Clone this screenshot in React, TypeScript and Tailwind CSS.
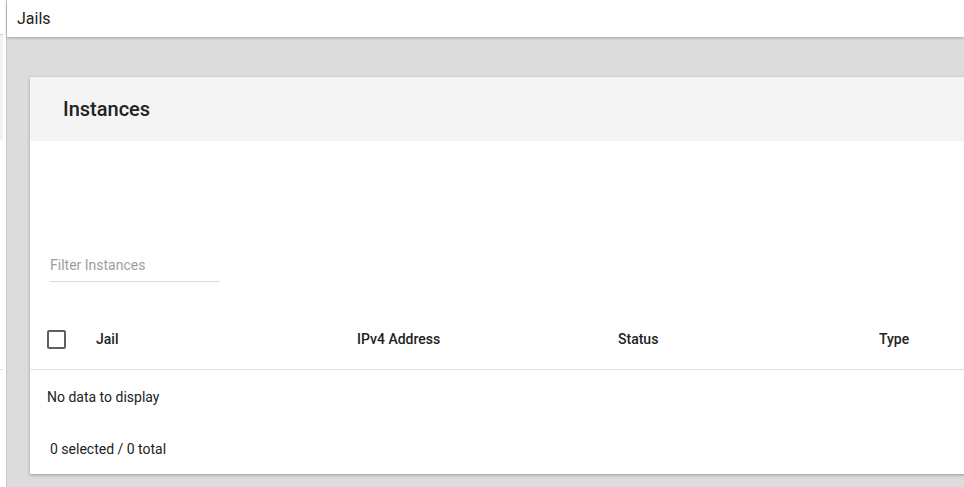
export default function App() {
  const cols = ["Jail", "IPv4 Address", "Status", "Type"];

  return (
    <div className="flex h-[487px] w-[964px] overflow-hidden bg-[#dcdcdc] font-['Roboto',sans-serif] text-[#222]">
      {/* cut-off sidebar */}
      <div className="flex w-[6px] shrink-0 flex-col bg-white">
        <div className="h-[35px] w-[3px] border-b border-[#cfcfcf]" />
        <div className="h-[105px] w-[3px] bg-[#f2f2f2]" />
        <div className="h-[230px] w-[3px] border-b border-[#e0e0e0]" />
      </div>
      <div className="w-px shrink-0 bg-[#c8c8c8]" />

      <div className="flex min-w-0 flex-1 flex-col">
        <div className="relative z-10 flex h-[37px] shrink-0 items-center bg-white pl-[10px] text-[16px] shadow-[0_1px_3px_rgba(0,0,0,0.25)]">
          Jails
        </div>

        <div className="flex-1 pl-[23px] pt-[40px]">
          <div className="h-[397px] w-[960px] bg-white shadow-[0_1px_3px_rgba(0,0,0,0.3)]">
            <div className="flex h-[64px] items-center bg-[#f4f4f4] pl-[33px] text-[20px] font-medium text-[#222]">
              Instances
            </div>

            <div className="pl-[20px] pt-[114px]">
              <div className="w-[170px] border-b border-[#dcdcdc] pb-[5px] text-[14px] text-[#9e9e9e]">
                Filter Instances
              </div>
            </div>

            <div className="mt-[28px] flex h-[60px] items-center border-b border-[#e0e0e0] pl-[17px] text-[14px] font-medium">
              <div className="h-[19px] w-[19px] shrink-0 rounded-[2px] border-2 border-[#5f5f5f]" />
              <div className="flex flex-1 pl-[30px]">
                {cols.map((c) => (
                  <div key={c} className="w-[261px] shrink-0">
                    {c}
                  </div>
                ))}
              </div>
            </div>

            <div className="pl-[17px] pt-[17px] text-[14px]">No data to display</div>
            <div className="pl-[20px] pt-[31px] text-[14px]">0 selected / 0 total</div>
          </div>
        </div>
      </div>
    </div>
  );
}
